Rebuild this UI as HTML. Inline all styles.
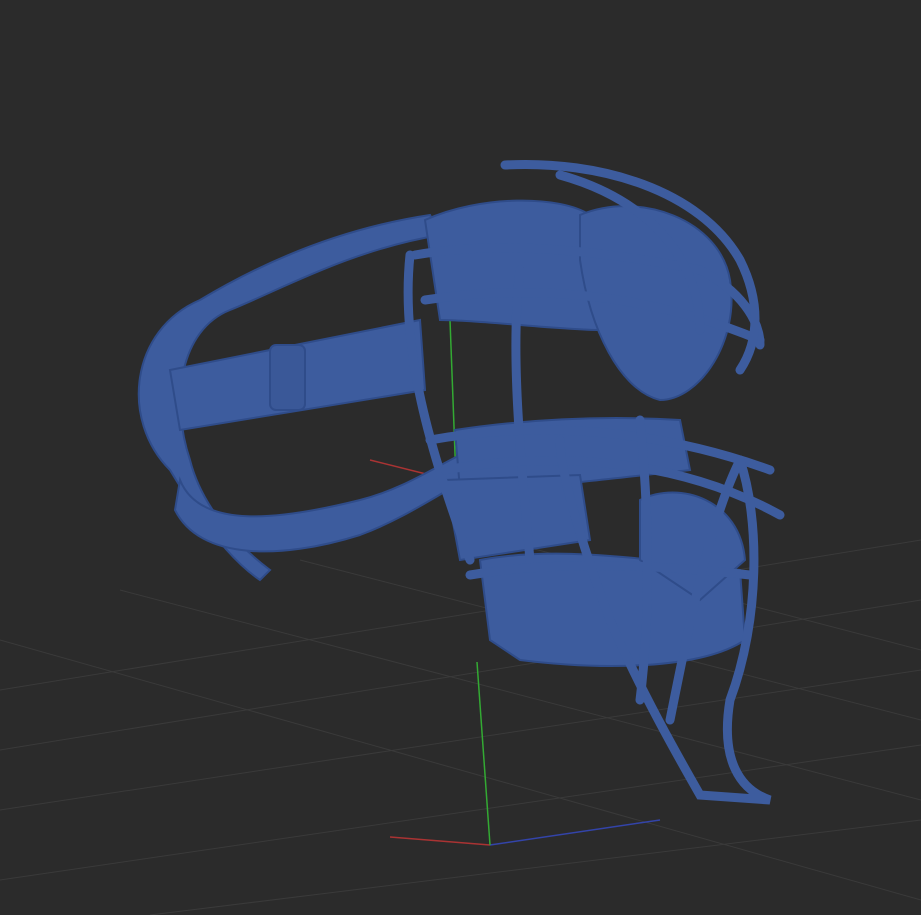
<!DOCTYPE html>
<html><head><style>html,body{margin:0;padding:0;background:#2b2b2b;overflow:hidden}svg{display:block}</style></head>
<body>
<svg width="921" height="915" viewBox="0 0 921 915" xmlns="http://www.w3.org/2000/svg">
<rect width="921" height="915" fill="#2b2b2b"/>
<g stroke="#3a3a3a" stroke-width="1" fill="none">
<line x1="0" y1="690" x2="921" y2="540"/>
<line x1="0" y1="750" x2="921" y2="600"/>
<line x1="0" y1="810" x2="921" y2="670"/>
<line x1="0" y1="880" x2="921" y2="745"/>
<line x1="150" y1="915" x2="921" y2="820"/>
<line x1="0" y1="640" x2="921" y2="900"/>
<line x1="120" y1="590" x2="921" y2="800"/>
<line x1="300" y1="560" x2="921" y2="720"/>
<line x1="500" y1="540" x2="921" y2="650"/>
</g>
<line x1="390" y1="837" x2="490" y2="845" stroke="#a33" stroke-width="1.5"/>
<line x1="490" y1="845" x2="660" y2="820" stroke="#34a" stroke-width="1.5"/>
<line x1="477" y1="662" x2="490" y2="845" stroke="#3a3" stroke-width="1.5"/>
<line x1="450" y1="320" x2="456" y2="480" stroke="#3a3" stroke-width="1.5"/>
<line x1="370" y1="460" x2="450" y2="480" stroke="#a33" stroke-width="1.5"/>
<line x1="560" y1="470" x2="620" y2="455" stroke="#34a" stroke-width="1.5"/>
<g fill="#3d5c9e" stroke="#2f4c8a" stroke-width="2">
<!-- head strap loops -->
<path d="M430 215 C330 230 250 270 200 300 C130 330 120 420 170 470 C200 520 230 560 260 580 L270 570 C230 540 200 500 190 460 C170 400 180 330 230 310 C280 290 350 250 440 235 Z"/>
<path d="M180 480 C200 530 280 520 360 500 C400 490 430 470 460 455 L465 480 C430 500 400 520 360 535 C280 560 200 560 175 510 Z"/>
<path d="M170 370 L420 320 L425 390 L180 430 Z"/>
<rect x="270" y="345" width="35" height="65" rx="6" fill="#3a5898"/>
<!-- pads -->
<path d="M425 220 C480 195 560 195 590 215 L600 330 C560 330 480 320 440 320 Z"/>
<path d="M580 215 C640 190 720 220 730 280 C740 340 700 400 660 400 C620 390 590 330 580 260 Z"/>
<path d="M455 430 C520 420 600 415 680 420 L690 470 C600 480 520 490 460 490 Z"/>
<path d="M445 480 L580 475 L590 540 L460 560 Z"/>
<path d="M480 560 C560 545 650 560 740 570 L745 640 C700 670 600 670 520 660 L490 640 Z"/>
<path d="M640 500 C680 480 740 500 745 560 L700 600 L640 560 Z"/>
</g>
<!-- cage bars -->
<g fill="none" stroke="#3d5c9e" stroke-width="9" stroke-linecap="round">
<path d="M410 255 C400 350 430 450 470 560"/>
<path d="M520 270 C510 350 520 450 530 560"/>
<path d="M415 255 C500 240 600 250 700 270 C740 290 760 320 760 345"/>
<path d="M425 300 C520 285 640 290 760 340"/>
<path d="M430 440 C540 420 660 430 770 470"/>
<path d="M445 470 C560 450 680 460 780 515"/>
<path d="M470 575 C560 560 660 565 750 575"/>
<path d="M505 165 C600 160 700 190 740 260 C760 300 760 340 740 370"/>
<path d="M560 175 C650 200 700 260 700 330"/>
<path d="M740 460 C760 520 760 620 730 700 C720 760 740 790 770 800 L700 795 C680 760 640 690 610 620 C580 540 560 470 560 440"/>
<path d="M740 460 C710 520 690 620 670 720"/>
<path d="M640 420 C650 520 650 620 640 700"/>
</g>
</svg>
</body></html>
